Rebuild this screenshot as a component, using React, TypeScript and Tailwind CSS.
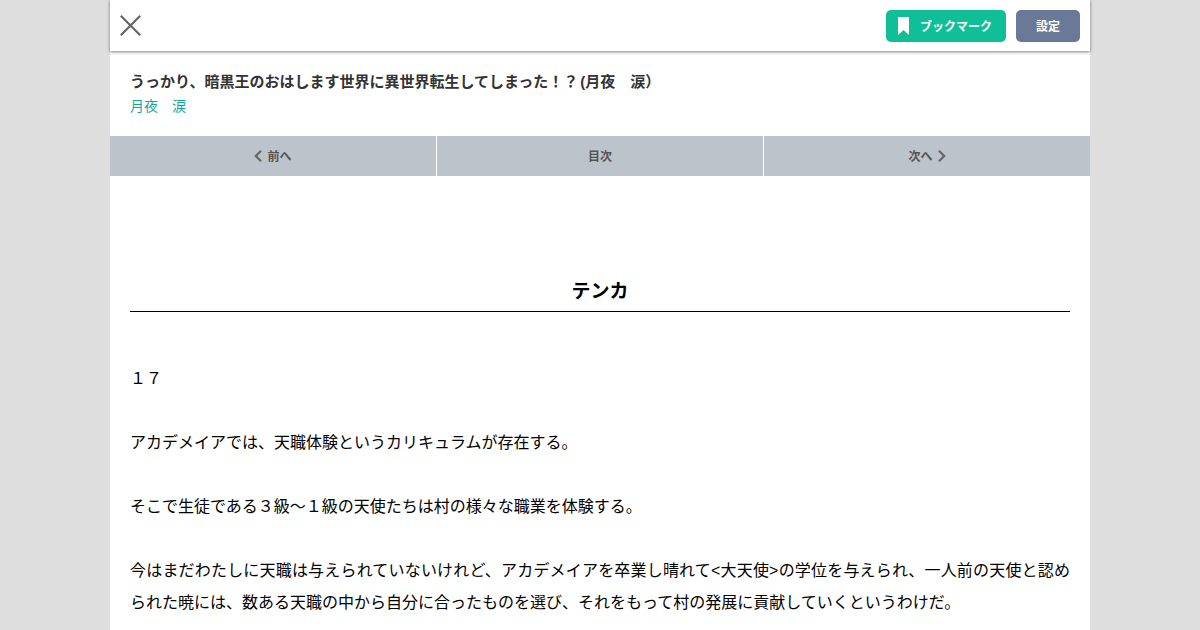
import React from 'react';

const tabs = 'flex-1 flex items-center justify-center gap-[5px] bg-[#bdc3cb]';

const CloseIcon = () => (
  <svg width="21" height="21" viewBox="0 0 21 21" fill="none" stroke="#666" strokeWidth="2.2"><path d="M.8.8l19.4 19.4M20.2.8L.8 20.2" /></svg>
);

const Chevron = ({ d }:{ d:string }) => (
  <svg width="8" height="12" viewBox="0 0 8 12" fill="none" stroke="#666" strokeWidth="2.2"><path d={d} /></svg>
);

const paragraphs = [
  '１７',
  'アカデメイアでは、天職体験というカリキュラムが存在する。',
  'そこで生徒である３級～１級の天使たちは村の様々な職業を体験する。',
  '今はまだわたしに天職は与えられていないけれど、アカデメイアを卒業し晴れて<大天使>の学位を与えられ、一人前の天使と認められた暁には、数ある天職の中から自分に合ったものを選び、それをもって村の発展に貢献していくというわけだ。',
];

export default function App(){
  return (
    <div lang="ja" className="h-[630px] overflow-hidden bg-[#dedede] font-['Liberation_Sans','Noto_Sans_CJK_JP',sans-serif] [text-spacing-trim:space-all]">
      <div className="mx-auto w-[980px] h-full bg-white">
        <header className="flex h-[51px] items-center justify-between px-2.5 shadow-[0_1px_3px_rgba(0,0,0,.5)]">
          <button><CloseIcon /></button>
          <div className="flex gap-2.5 text-xs font-bold text-white">
            <button className="flex h-8 w-[120px] items-center gap-[11px] rounded-[5px] bg-[#0fbf97] pl-3">
              <svg width="11" height="18" viewBox="0 0 11 18" fill="#fff"><path d="M0 0h11v18l-5.5-5L0 18z" /></svg>
              <span className="pt-0.5">ブックマーク</span>
            </button>
            <button className="h-8 w-16 rounded-[5px] bg-[#6b7998] pt-0.5">設定</button>
          </div>
        </header>
        <div className="h-[85px] px-5 pt-[19px]">
          <h1 className="text-[15px] leading-6 font-bold text-[#333]">うっかり、暗黒王のおはします世界に異世界転生してしまった！？<span className="ml-0.5">(</span>月夜　涙）</h1>
          <p className="text-sm leading-6 text-[#12a89d]">月夜　涙</p>
        </div>
        <nav className="flex h-10 gap-px text-xs font-bold text-[#555]">
          <a className={tabs}><Chevron d="M7 .8L1.8 6 7 11.2" /><span className="pt-0.5">前へ</span></a>
          <a className={tabs}><span className="pt-0.5">目次</span></a>
          <a className={tabs}><span className="pt-0.5">次へ</span><Chevron d="M1 .8L6.2 6 1 11.2" /></a>
        </nav>
        <main className="px-5 pt-[94px] text-black">
          <h2 className="h-[42px] border-b border-black pt-0.5 text-center text-[19px] leading-10 font-bold">テンカ</h2>
          <div className="mt-[51px] flex flex-col gap-8 text-justify text-base leading-8">
            {paragraphs.map(p => <p key={p}>{p}</p>)}
          </div>
        </main>
      </div>
    </div>
  );
}
